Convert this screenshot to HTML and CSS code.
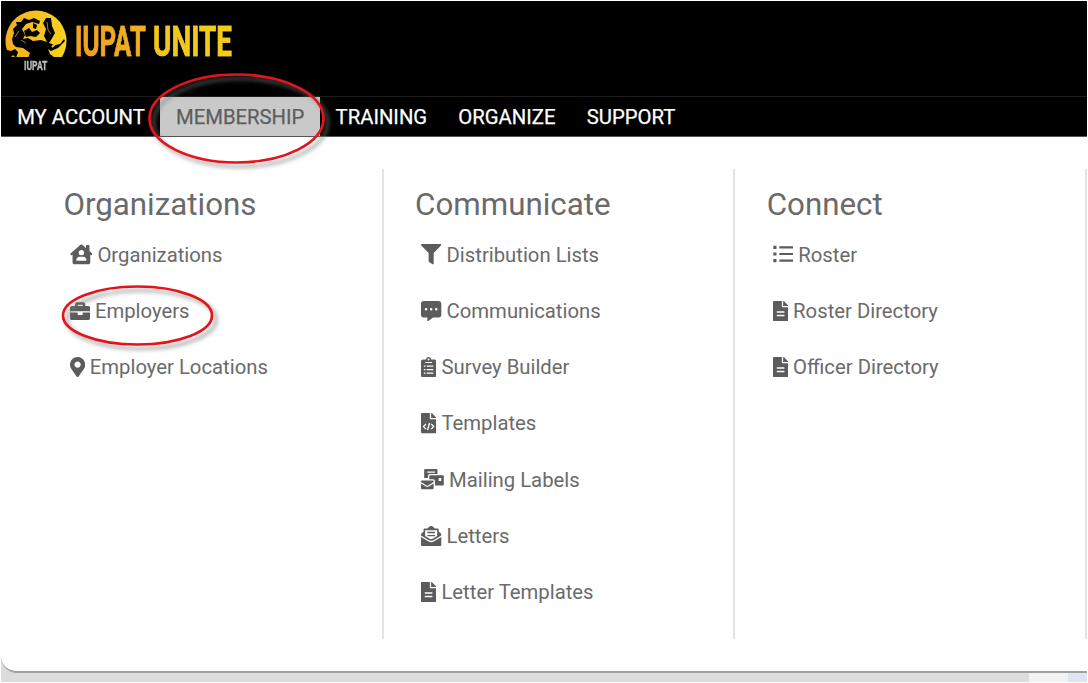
FILE: index.html
```html
<!DOCTYPE html>
<html lang="en">

<head>
    <meta charset="UTF-8">
    <meta name="viewport" content="width=device-width, initial-scale=1.0">
    <title>IUPAT Unite</title>
    <link rel="stylesheet" href="styles.css">
</head>

<body>
    <!-- shared icon shapes -->
    <svg class="sprite">
        <symbol id="file" viewBox="0 0 384 512">
            <path fill-rule="evenodd" d="M224 136V0H24C10.700 0 0 10.700 0 24v464c0 13.300 10.700 24 24 24h336c13.300 0 24-10.700 24-24V160H248c-13.200 0-24-10.800-24-24zM96 256h192v40H96zM96 344h192v40H96zM384 122v6H256V0h6c6.400 0 12.500 2.500 17 7l98 98c4.500 4.500 7 10.600 7 17z" />
        </symbol>
    </svg>

    <header>
        <div class="brand">
            <svg class="logo" width="240" height="74" viewBox="0 0 240 74">
                <defs>
                    <linearGradient id="gold" x1="0" x2="1" y1="0" y2="0">
                        <stop offset="0" stop-color="#f2ae1f" />
                        <stop offset="1" stop-color="#f9d41c" />
                    </linearGradient>
                </defs>
                <path d="M9 56A30.500 30.500 0 1 1 61 56z" fill="url(#gold)" />
                <!-- the two arm wrestling workers -->
                <path d="M11 38L13 32L12 28L16 24L15 21L20 21L23 17L28 19L33 17L39 20L38 23L31 21L25 23L21 28L24 34L22 38L27 37L32 40L40 39L46 41L43 35L45 28L42 22L45 17L50 17L51 25L54 32L50 39L48 42L54 44L59 43L63 38L64 40L57 47L50 50L47 48L49 53L54 57H27L29 52L22 47L15 46L12 43z" />
                <path d="M23 30L28 27L31 31L36 29L39 32L35 36L29 35L25 36z" />
                <path d="M32 22L36 24L35 28L32 27z" />
                <path d="M14 36L18 30M25 42L20 39M46 21L47 29L50 33" fill="none" stroke="#d99c1b" stroke-width="0.800" />
                <path d="M6 49L10 50L14 48L17 51L15 57L12 54L9 57L6 55z" />
                <path d="M51 46L56 41L62 37" fill="none" stroke="#f6c81c" stroke-width="2" />
            </svg>
            <div class="title">
                <span class="iupat">IUPAT</span>
                <span class="unite">UNITE</span>
            </div>
            <span class="small">IUPAT</span>
        </div>
        <nav>
            <a href="#">MY ACCOUNT</a>
            <a href="#" class="active">MEMBERSHIP</a>
            <a href="#">TRAINING</a>
            <a href="#">ORGANIZE</a>
            <a href="#">SUPPORT</a>
        </nav>
    </header>

    <main>
        <div class="menu">
            <section>
                <h2>Organizations</h2>
                <ul>
                    <li>
                        <svg class="icon wide" viewBox="0 0 576 512"><path fill-rule="evenodd" d="M266 19c12-11 32-11 44 0l94 82V44c0-9 7-16 16-16h56c9 0 16 7 16 16v135l70 62c9 8 9 17 3 24l-14 15c-6 7-15 7-22 1l-17-15v198c0 26-22 48-48 48H112c-26 0-48-22-48-48V266l-17 15c-7 6-16 6-22-1l-14-15c-6-7-6-16 3-24zM288 150a68 68 0 1 0 0 136a68 68 0 1 0 0-136zM240 320c-44 0-80 36-80 80c0 14 7 24 16 24h224c9 0 16-10 16-24c0-44-36-80-80-80z" /></svg>
                        <a href="#">Organizations</a>
                    </li>
                    <li>
                        <svg class="icon" viewBox="0 0 512 512"><path d="M320 336c0 8.840-7.160 16-16 16h-96c-8.840 0-16-7.160-16-16v-48H0v144c0 25.600 22.400 48 48 48h416c25.600 0 48-22.400 48-48V288H320v48zm144-208h-80V80c0-25.600-22.400-48-48-48H176c-25.600 0-48 22.400-48 48v48H48c-25.600 0-48 22.400-48 48v80h512v-80c0-25.600-22.400-48-48-48zm-144 0H192V96h128v32z" /></svg>
                        <a href="#">Employers</a>
                    </li>
                    <li>
                        <svg class="icon narrow" viewBox="0 0 384 512"><path d="M172.268 501.670C26.970 291.031 0 269.413 0 192 0 85.961 85.961 0 192 0s192 85.961 192 192c0 77.413-26.970 99.031-172.268 309.670-9.535 13.774-29.930 13.773-39.464 0zM192 272c44.183 0 80-35.817 80-80s-35.817-80-80-80-80 35.817-80 80 35.817 80 80 80z" /></svg>
                        <a href="#">Employer Locations</a>
                    </li>
                </ul>
            </section>
            <section>
                <h2>Communicate</h2>
                <ul>
                    <li>
                        <svg class="icon" viewBox="0 0 512 512"><path d="M487.976 0H24.028C2.710 0-8.047 25.866 7.058 40.971L192 225.941V432c0 7.831 3.821 15.170 10.237 19.662l80 55.980C298.020 518.690 320 507.493 320 487.980V225.941l184.947-184.970C520.021 25.896 509.338 0 487.976 0z" /></svg>
                        <a href="#">Distribution Lists</a>
                    </li>
                    <li>
                        <svg class="icon" viewBox="0 0 512 512"><path fill-rule="evenodd" d="M448 0H64C28.700 0 0 28.700 0 64v288c0 35.300 28.700 64 64 64h96v84c0 9.800 11.200 15.500 19.100 9.700L304 416h144c35.300 0 64-28.700 64-64V64c0-35.300-28.700-64-64-64zM128 176a32 32 0 1 0 0 64a32 32 0 1 0 0-64zM256 176a32 32 0 1 0 0 64a32 32 0 1 0 0-64zM384 176a32 32 0 1 0 0 64a32 32 0 1 0 0-64z" /></svg>
                        <a href="#">Communications</a>
                    </li>
                    <li>
                        <svg class="icon narrow" viewBox="0 0 384 512"><path fill-rule="evenodd" d="M336 64h-80c0-35.300-28.700-64-64-64s-64 28.700-64 64H48C21.500 64 0 85.500 0 112v352c0 26.500 21.500 48 48 48h288c26.500 0 48-21.500 48-48V112c0-26.500-21.500-48-48-48zM192 40a24 24 0 1 0 0 48a24 24 0 1 0 0-48zM104 128h176v24H104zM72 216h40v30H72zM144 216h168v30H144zM72 304h40v30H72zM144 304h168v30H144zM72 392h40v30H72zM144 392h168v30H144z" /></svg>
                        <a href="#">Survey Builder</a>
                    </li>
                    <li>
                        <svg class="icon narrow" viewBox="0 0 384 512"><path d="M384 122v6H256V0h6c6.400 0 12.500 2.500 17 7l98 98c4.500 4.500 7 10.600 7 17zM248 160c-13.200 0-24-10.800-24-24V0H24C10.700 0 0 10.700 0 24v464c0 13.300 10.700 24 24 24h336c13.300 0 24-10.700 24-24V160z" /><path class="cut" d="M125 278L65 343L125 408M218 253L166 433M259 278L319 343L259 408" /></svg>
                        <a href="#">Templates</a>
                    </li>
                    <li>
                        <svg class="icon wide" viewBox="0 0 576 512"><path fill-rule="evenodd" d="M80 24Q80 0 104 0H392Q416 0 416 24V128H224Q176 128 176 176V224H80zM160 64V96H352V64zM208 184Q208 160 232 160H552Q576 160 576 184V392Q576 416 552 416H352V304Q352 256 304 256H208zM448 224V304H512V224zM0 312Q0 288 24 288H296Q320 288 320 312V326L180 414Q160 426 140 414L0 326zM0 364L128 444Q160 464 192 444L320 364V488Q320 512 296 512H24Q0 512 0 488z" /></svg>
                        <a href="#">Mailing Labels</a>
                    </li>
                    <li>
                        <svg class="icon" viewBox="0 0 512 512"><path fill-rule="evenodd" d="M176 344L0 240Q0 196 20 177L64 142V96Q64 64 96 64H162L194 30Q256-26 318 30L350 64H416Q448 64 448 96V142L492 177Q512 196 512 240L336 344Q256 400 176 344zM104 108V254L208 318Q256 350 304 318L408 254V108zM160 148H352V184H160zM160 224H352V260H160zM0 278L180 386Q256 432 332 386L512 278V464Q512 512 464 512H48Q0 512 0 464z" /></svg>
                        <a href="#">Letters</a>
                    </li>
                    <li>
                        <svg class="icon narrow"><use href="#file" /></svg>
                        <a href="#">Letter Templates</a>
                    </li>
                </ul>
            </section>
            <section>
                <h2>Connect</h2>
                <ul>
                    <li>
                        <svg class="icon" viewBox="0 0 512 512"><path d="M8 44H88V124H8zM8 212H88V292H8zM8 380H88V460H8zM160 56H512V112H160zM160 224H512V280H160zM160 392H512V448H160z" /></svg>
                        <a href="#">Roster</a>
                    </li>
                    <li>
                        <svg class="icon narrow"><use href="#file" /></svg>
                        <a href="#">Roster Directory</a>
                    </li>
                    <li>
                        <svg class="icon narrow"><use href="#file" /></svg>
                        <a href="#">Officer Directory</a>
                    </li>
                </ul>
            </section>
        </div>
    </main>

    <!-- red circles round the menu entries to click -->
    <svg class="marks" width="1088" height="683">
        <ellipse cx="236.500" cy="118.500" rx="87" ry="44" />
        <ellipse cx="137.500" cy="315.500" rx="74.500" ry="29" />
    </svg>
</body>

</html>
```
FILE: styles.css
```css
* {
    box-sizing: border-box;
}

body {
    margin: 0;
    padding: 1px;
    height: 683px;
    overflow: hidden;
    background-color: #fff;
    font-family: Roboto, "Liberation Sans", sans-serif;
    font-size: 20.3px;
    color: #6a6a6a;
}

a {
    color: inherit;
    text-decoration: none;
}

.sprite {
    display: none;
}

header {
    height: 136px;
    background-color: #000;
    color: #fff;
}

.brand {
    position: relative;
    height: 96px;
    border-bottom: 1px solid #1c1c1c;
}

.logo {
    display: block;
}

.title {
    position: absolute;
    top: 15px;
    left: 74px;
    height: 50px;
    font-size: 43px;
    line-height: 50px;
    font-weight: bold;
}

.title span {
    position: absolute;
    top: 0;
    left: 0;
    color: transparent;
    background: linear-gradient(to right, #eea020, #f2b21e);
    background-clip: text;
    -webkit-background-clip: text;
    -webkit-text-stroke: 0.6px #efaa1e;
    transform-origin: left top;
}

.title .iupat {
    transform: scaleX(0.6);
}

.title .unite {
    left: 77.5px;
    background-image: linear-gradient(to right, #f2c51b, #f3cd1a);
    -webkit-text-stroke-color: #f2ca1a;
    transform: scaleX(0.65);
}

.small {
    position: absolute;
    top: 57px;
    left: 23px;
    font-size: 12.5px;
    line-height: 15px;
    font-weight: bold;
    color: #bbb;
    transform: scaleX(0.68);
    transform-origin: left top;
    -webkit-text-stroke: 0.4px;
}

nav {
    display: flex;
    height: 40px;
    padding-left: 0.6px;
    border-bottom: 1px solid #555;
    -webkit-text-stroke: 0.25px;
}

nav a {
    padding: 0 15.6px;
    line-height: 41px;
    white-space: nowrap;
}

nav .active {
    background-color: #c9c9c9;
    color: #5c5e60;
}

main {
    height: 545px;
    background: linear-gradient(to right, #dcdcdc 1028px, #f2f2f2 1028px, #f2f2f2 1067px, #dce6f2 1067px);
}

.menu {
    display: flex;
    height: 536px;
    padding: 32px 0 32px 31px;
    background-color: #fff;
    border-bottom: 2px solid #a0a0a0;
    border-bottom-left-radius: 16px;
}

section {
    flex: 1;
    padding: 15px 0 0 31.4px;
    border-right: 2px solid #e4e4e4;
}

h2 {
    margin: 0;
    font-size: 31.3px;
    font-weight: normal;
    line-height: 41px;
}

ul {
    list-style: none;
    margin: 0;
    padding: 1.5px 0 0 6.2px;
}

li {
    display: flex;
    align-items: center;
    gap: 5px;
    height: 56.25px;
    white-space: nowrap;
}

.icon {
    width: 20.3px;
    height: 20.3px;
    fill: #5c5c5c;
}

.icon.narrow {
    width: 15.2px;
}

.icon.wide {
    width: 22.8px;
}

.cut {
    fill: none;
    stroke: #fff;
    stroke-width: 34;
}

.marks {
    position: absolute;
    top: 0;
    left: 0;
    fill: none;
    stroke: #e3141c;
    stroke-width: 2.7;
    pointer-events: none;
    filter: drop-shadow(4px 4px 2px rgba(120, 120, 120, 0.75));
}
```
